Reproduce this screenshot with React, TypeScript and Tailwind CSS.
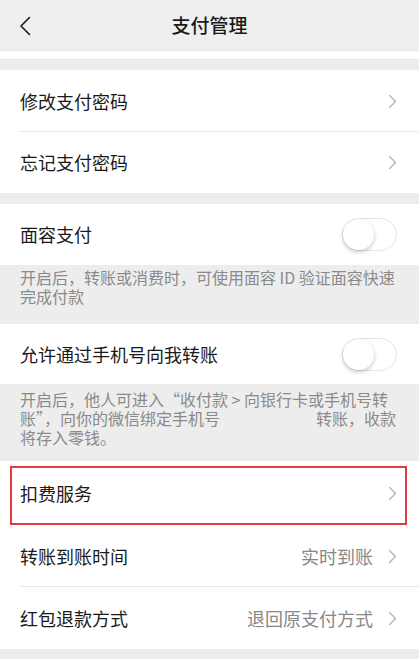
import React from 'react';

const Chevron: React.FC = () => (
  <svg width="9" height="15" viewBox="0 0 9 15" fill="none" className="shrink-0">
    <path d="M1.5 1.5l6 6-6 6" stroke="#b2b2b2" strokeWidth={1.4} strokeLinecap="round" strokeLinejoin="round" />
  </svg>
);

const Toggle: React.FC = () => (
  <div className="relative w-[55px] h-[33px] rounded-full border border-[#e3e3e3] bg-white shrink-0">
    <div className="absolute left-0 top-0 w-[31px] h-[31px] rounded-full bg-white shadow-[0_2px_4px_rgba(0,0,0,0.22)]" />
  </div>
);

type RowProps = {
  label: string;
  value?: string;
  toggle?: boolean;
  divider?: boolean;
  className?: string;
};

const Row: React.FC<RowProps> = ({ label, value, toggle, divider, className = 'h-[61px]' }) => (
  <div className={`relative flex items-center pl-[20px] pr-[22px] bg-white ${className}`}>
    <span className="flex-1 text-[18px] text-[#1a1a1a]">{label}</span>
    {value && <span className="text-[18px] text-[#888888] mr-[15px]">{value}</span>}
    {toggle ? <Toggle /> : <Chevron />}
    {divider && <div className="absolute left-[20px] right-0 bottom-0 h-px bg-[#e8e8e8]" />}
  </div>
);

export default function App() {
  return (
    <div
      className="w-[419px] h-[659px] overflow-hidden bg-[#ededed]"
      style={{ fontFamily: '"Noto Sans CJK SC", "Noto Sans", sans-serif' }}
    >
      {/* Nav bar */}
      <div className="relative h-[50px] flex items-center justify-center bg-[#efefef]">
        <svg className="absolute left-[19px] top-[16px]" width="12" height="20" viewBox="0 0 12 20" fill="none">
          <path d="M10.5 1.5L2 10l8.5 8.5" stroke="#1a1a1a" strokeWidth={1.6} strokeLinecap="round" strokeLinejoin="round" />
        </svg>
        <span className="text-[19px] font-medium text-[#1a1a1a]">支付管理</span>
      </div>

      <div className="h-[10px] bg-white border-y border-[#e6e6e6]" />
      <div className="h-[10px]" />

      <Row label="修改支付密码" divider className="h-[62px]" />
      <Row label="忘记支付密码" />

      <div className="h-[11px]" />

      <Row label="面容支付" toggle />
      <div className="px-[20px] pt-[3px] pb-[18px] text-[16px] leading-[19px] text-[#8a8a8a]">
        开启后，转账或消费时，可使用面容 ID 验证面容快速<br />完成付款
      </div>

      <Row label="允许通过手机号向我转账" toggle className="h-[60px]" />
      <div className="px-[20px] pt-[6px] pb-[14px] text-[16px] leading-[19px] text-[#8a8a8a] whitespace-nowrap">
        开启后，他人可进入“收付款 &gt; 向银行卡或手机号转<br />
        账”，向你的微信绑定手机号<span className="inline-block w-[96px]" />转账，收款<br />
        将存入零钱。
      </div>

      <div className="relative">
        <Row label="扣费服务" className="h-[64px]" />
        <div className="absolute left-[10px] right-[12px] top-[5px] bottom-0 border-[2px] border-[#e4393e] pointer-events-none" />
      </div>
      <Row label="转账到账时间" value="实时到账" divider className="h-[62px]" />
      <Row label="红包退款方式" value="退回原支付方式" className="h-[62px]" />
    </div>
  );
}
